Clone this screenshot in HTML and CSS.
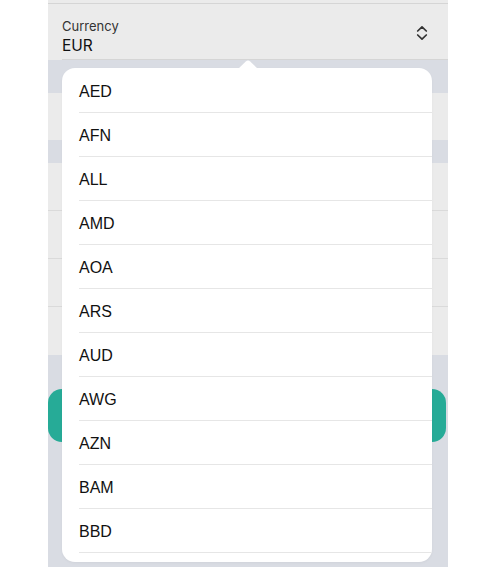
FILE: index.html
```html
<!DOCTYPE html>
<html lang="en">
<head>
<meta charset="utf-8">
<title>Currency picker</title>
<link rel="stylesheet" href="styles.css">
</head>
<body>
<div class="page">
  <div class="panel">
    <div class="top-strip"></div>
    <div class="field">
      <div class="field-inner">
        <div class="field-text">
          <div class="field-label">Currency</div>
          <div class="field-value">EUR</div>
        </div>
        <svg class="chevrons" width="12" height="16" viewBox="0 0 12 16" aria-hidden="true">
          <path d="M1.7 6 L6 1.8 L10.3 6" fill="none" stroke="#333" stroke-width="1.7" stroke-linecap="round" stroke-linejoin="round"/>
          <path d="M1.7 10 L6 14.2 L10.3 10" fill="none" stroke="#333" stroke-width="1.7" stroke-linecap="round" stroke-linejoin="round"/>
        </svg>
      </div>
    </div>
    <div class="band band-a"></div>
    <div class="row row-single"></div>
    <div class="band band-b"></div>
    <div class="group">
      <div class="row"></div>
      <div class="row"></div>
      <div class="row"></div>
      <div class="row"></div>
    </div>
    <div class="band band-c"></div>
    <div class="button"></div>
  </div>

  <div class="popover">
    <svg class="popover-arrow" width="20" height="9" viewBox="0 0 20 9" aria-hidden="true">
      <path d="M0 9 L7.8 1.6 Q10 -0.4 12.2 1.6 L20 9 Z" fill="#fff"/>
    </svg>
    <ul class="options">
      <li class="option"><span class="option-inner">AED</span></li>
      <li class="option"><span class="option-inner">AFN</span></li>
      <li class="option"><span class="option-inner">ALL</span></li>
      <li class="option"><span class="option-inner">AMD</span></li>
      <li class="option"><span class="option-inner">AOA</span></li>
      <li class="option"><span class="option-inner">ARS</span></li>
      <li class="option"><span class="option-inner">AUD</span></li>
      <li class="option"><span class="option-inner">AWG</span></li>
      <li class="option"><span class="option-inner">AZN</span></li>
      <li class="option"><span class="option-inner">BAM</span></li>
      <li class="option"><span class="option-inner">BBD</span></li>
    </ul>
  </div>
</div>
</body>
</html>
```

FILE: styles.css
```css
* { box-sizing: border-box; }

html, body {
  margin: 0;
  padding: 0;
  background: #ffffff;
}

body {
  font-family: "Inter", "Liberation Sans", sans-serif;
}

.page {
  position: relative;
  width: 500px;
  height: 567px;
  overflow: hidden;
  padding-left: 48px;
}

.panel {
  width: 400px;
  height: 567px;
  background: #d9dce3;
  display: flex;
  flex-direction: column;
}

.top-strip {
  height: 4px;
  background: #ebebeb;
  border-bottom: 1px solid #d5d5d5;
}

.field {
  background: #ebebeb;
  padding-left: 14px;
}

.field-inner {
  height: 56px;
  display: flex;
  justify-content: space-between;
  align-items: flex-start;
  padding-right: 20px;
  border-bottom: 1px solid #d5d5d5;
}

.field-text {
  padding-top: 14px;
}

.field-label {
  font-size: 13px;
  line-height: 16px;
  color: #333333;
}

.field-value {
  margin-top: 3px;
  font-size: 15.5px;
  line-height: 18px;
  color: #111111;
}

.chevrons {
  margin-top: 21px;
}

.band-a { height: 33px; }
.band-b { height: 23px; }
.band-c { height: 34px; }

.row {
  height: 48px;
  background: #ebebeb;
  border-bottom: 1px solid #dadada;
}

.row-single {
  height: 47px;
  border-bottom: none;
}

.group .row:last-child {
  border-bottom: none;
}

.button {
  height: 53px;
  margin: 0 2px 0 0;
  background: #26ab97;
  border-radius: 14px;
}

.popover {
  position: absolute;
  left: 62px;
  top: 68px;
  width: 370px;
  height: 494px;
}

.popover-arrow {
  position: absolute;
  left: 176px;
  top: -8px;
  display: block;
}

.options {
  list-style: none;
  margin: 0;
  padding: 1px 0 0 0;
  height: 100%;
  background: #ffffff;
  border-radius: 13px;
  overflow: hidden;
  box-shadow: 0 1px 3px rgba(0, 0, 0, 0.04);
}

.option {
  padding-left: 17px;
}

.option-inner {
  display: flex;
  align-items: center;
  height: 44px;
  padding-top: 2px;
  border-bottom: 1px solid #e6e6e6;
  font-family: "Liberation Sans", Arial, sans-serif;
  font-size: 16px;
  color: #111111;
}
```
